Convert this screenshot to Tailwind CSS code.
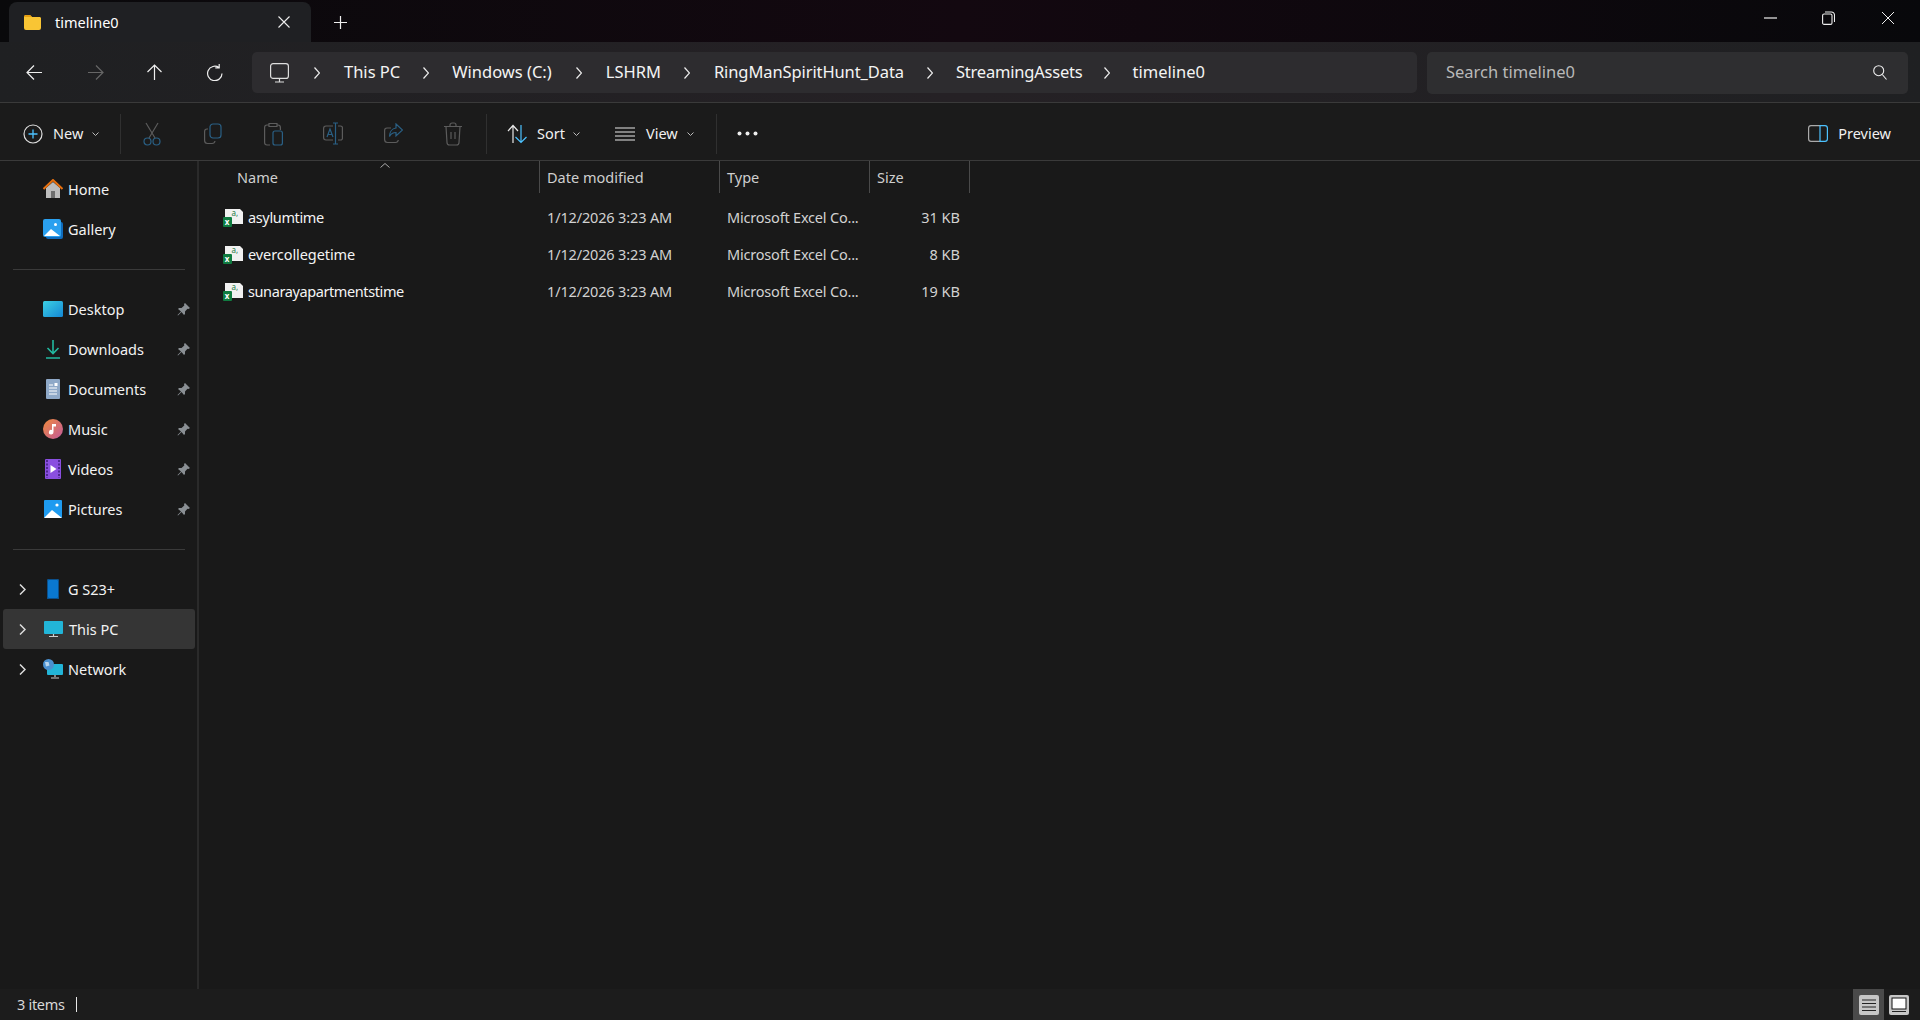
<!DOCTYPE html>
<html>
  <head>
    <meta charset="UTF-8" />
    <script src="https://cdn.jsdelivr.net/npm/@tailwindcss/browser@4"></script>
    <title>timeline0 - File Explorer</title>
  </head>
  <body>
    <div class="w-[1920px] h-[1020px] overflow-hidden flex flex-col bg-[#191919] text-white font-['Noto_Sans',sans-serif]">
      <!-- title bar -->
      <div class="h-[42px] shrink-0 flex items-end bg-linear-to-r from-[#09090b] via-[#130810] to-[#08080b]">
        <div class="ml-[9px] w-[302px] h-[40px] bg-[#1f2023] rounded-t-[8px] flex items-center">
          <svg class="ml-[14px] w-[19px] h-[16px]" viewBox="0 0 19 16"><path d="M1 3a2 2 0 0 1 2-2h4l2 2h8a2 2 0 0 1 1 1v10a2 2 0 0 1-2 2H3a2 2 0 0 1-2-2z" fill="#f9c534"/><path d="M1 3a2 2 0 0 1 2-2h4l2 2z" fill="#e59e12"/></svg>
          <span class="ml-[13px] text-[14.5px] leading-none">timeline0</span>
          <svg class="ml-auto mr-[21px] w-[12px] h-[12px]" viewBox="0 0 12 12" fill="none" stroke="#eee" stroke-width="1.1"><path d="M.5.5l11 11M11.5.5l-11 11"/></svg>
        </div>
        <svg class="ml-[23px] mb-[13px] w-[13px] h-[13px]" viewBox="0 0 13 13" fill="none" stroke="#eee" stroke-width="1.2"><path d="M6.5 0v13M0 6.5h13"/></svg>
        <div class="ml-auto h-[42px] pb-[7px] flex items-center">
          <svg class="w-[13px] h-[2px]" viewBox="0 0 13 2"><path d="M0 1h13" stroke="#eee" stroke-width="1.2"/></svg>
          <svg class="ml-[45px] w-[13px] h-[14px]" viewBox="0 0 13 14" fill="none" stroke="#eee" stroke-width="1.1"><rect x=".6" y="3" width="9.4" height="10.4" rx="1.5"/><path d="M3 1h6.5a3 3 0 0 1 3 3v7"/></svg>
          <svg class="ml-[47px] mr-[26px] w-[12px] h-[12px]" viewBox="0 0 12 12" fill="none" stroke="#eee" stroke-width="1"><path d="M0 0l12 12M12 0L0 12"/></svg>
        </div>
      </div>

      <!-- nav bar -->
      <div class="h-[61px] shrink-0 flex items-start border-b border-[#3a3a3a] bg-linear-to-r from-[#1f2022] via-[#252125] to-[#1f2022]">
        <div class="w-[252px] h-[60px] flex items-center">
          <div class="w-[68px] flex justify-center"><svg class="w-[17px] h-[17px]" viewBox="0 0 17 17" fill="none" stroke="#eee" stroke-width="1.2"><path d="M16 8.5H1.5M8 1.5l-7 7 7 7"/></svg></div>
          <div class="w-[54px] flex justify-center"><svg class="w-[17px] h-[17px]" viewBox="0 0 17 17" fill="none" stroke="#666" stroke-width="1.2"><path d="M1 8.5h14.5M9 1.5l7 7-7 7"/></svg></div>
          <div class="w-[64px] flex justify-center"><svg class="w-[17px] h-[17px]" viewBox="0 0 17 17" fill="none" stroke="#eee" stroke-width="1.2"><path d="M8.5 16V1.5M1.5 8l7-7 7 7"/></svg></div>
          <div class="w-[56px] flex justify-center"><svg class="w-[17px] h-[17px]" viewBox="0 0 17 17" fill="none" stroke="#eee" stroke-width="1.2"><path d="M16 9.500a7.200 7.200 0 1 1-3-5.900M13.200 0v3.900H9.300"/></svg></div>
        </div>
        <div class="mt-[10px] w-[1165px] h-[41px] rounded-[5px] bg-[#2d2c2f] flex items-center text-[16.5px] text-[#f4f4f4]">
          <svg class="ml-[18px] w-[19px] h-[20px] shrink-0" viewBox="0 0 19 20" fill="none" stroke="#ddd" stroke-width="1.2"><rect x=".6" y=".6" width="17.8" height="14.8" rx="2.5"/><path d="M9.5 15.5v3M5 19h9"/></svg>
          <svg class="ml-[25px] w-[6px] h-[12px] shrink-0" viewBox="0 0 6 12" fill="none" stroke="#eee" stroke-width="1.2"><path d="M.5.5L5.5 6 .5 11.500"/></svg>
          <span class="ml-[24px] leading-none">This PC</span>
          <svg class="ml-[23px] w-[6px] h-[12px] shrink-0" viewBox="0 0 6 12" fill="none" stroke="#eee" stroke-width="1.2"><path d="M.5.5L5.5 6 .5 11.500"/></svg>
          <span class="ml-[23px] leading-none">Windows (C:)</span>
          <svg class="ml-[24px] w-[6px] h-[12px] shrink-0" viewBox="0 0 6 12" fill="none" stroke="#eee" stroke-width="1.2"><path d="M.5.5L5.5 6 .5 11.500"/></svg>
          <span class="ml-[24px] leading-none">LSHRM</span>
          <svg class="ml-[23px] w-[6px] h-[12px] shrink-0" viewBox="0 0 6 12" fill="none" stroke="#eee" stroke-width="1.2"><path d="M.5.5L5.5 6 .5 11.500"/></svg>
          <span class="ml-[24px] leading-none tracking-[-0.1px]">RingManSpiritHunt_Data</span>
          <svg class="ml-[23px] w-[6px] h-[12px] shrink-0" viewBox="0 0 6 12" fill="none" stroke="#eee" stroke-width="1.2"><path d="M.5.5L5.5 6 .5 11.500"/></svg>
          <span class="ml-[23px] leading-none tracking-[-0.2px]">StreamingAssets</span>
          <svg class="ml-[21px] w-[6px] h-[12px] shrink-0" viewBox="0 0 6 12" fill="none" stroke="#eee" stroke-width="1.2"><path d="M.5.5L5.5 6 .5 11.500"/></svg>
          <span class="ml-[23px] leading-none">timeline0</span>
        </div>
        <div class="mt-[10px] ml-[10px] w-[481px] h-[42px] pb-[1px] rounded-[5px] bg-[#2e2e30] flex items-center text-[16.5px] text-[#b9b9b9]">
          <span class="ml-[19px] leading-none">Search timeline0</span>
          <svg class="ml-auto mr-[21px] w-[14px] h-[15px]" viewBox="0 0 14 15" fill="none" stroke="#eee" stroke-width="1.1"><circle cx="5.700" cy="5.700" r="5"/><path d="M9.300 9.500l4.200 5"/></svg>
        </div>
      </div>

      <!-- toolbar -->
      <div class="h-[58px] shrink-0 pt-[4px] flex items-center border-b border-[#3a3a3a] bg-[#1b1b1b] text-[14.5px] text-[#f0f0f0]">
        <div class="w-[120px] flex items-center">
          <svg class="ml-[23px] w-[20px] h-[20px]" viewBox="0 0 20 20" fill="none"><circle cx="10" cy="10" r="9" stroke="#ddd" stroke-width="1.2"/><path d="M10 5.500v9M5.500 10h9" stroke="#4cc2ff" stroke-width="1.3"/></svg>
          <span class="ml-[10px] leading-none">New</span>
          <svg class="ml-[9px] w-[7px] h-[4px]" viewBox="0 0 7 4" fill="none" stroke="#bbb"><path d="M.5.5l3 3 3-3"/></svg>
        </div>
        <div class="w-px h-[40px] bg-[#303030]"></div>
        <!-- disabled actions -->
        <div class="w-[62px] flex justify-center"><svg class="w-[18px] h-[24px]" viewBox="0 0 18 24" fill="none" stroke-width="1.2"><path d="M3 1l9 15M15 1L6 16" stroke="#5c5c5c"/><circle cx="4.500" cy="19.500" r="3.500" stroke="#2a6085"/><circle cx="13.500" cy="19.500" r="3.500" stroke="#2a6085"/></svg></div>
        <div class="w-[60px] flex justify-center"><svg class="w-[18px] h-[22px]" viewBox="0 0 18 22" fill="none" stroke-width="1.2"><path d="M4 6H3a2.500 2.500 0 0 0-2.400 2.500v9A3 3 0 0 0 3.500 20.500H8a3 3 0 0 0 3-2.500" stroke="#5c5c5c"/><rect x="6" y="1" width="11" height="14" rx="3" stroke="#2a6085"/></svg></div>
        <div class="w-[60px] flex justify-center"><svg class="w-[19px] h-[24px]" viewBox="0 0 19 24" fill="none" stroke-width="1.2"><path d="M5 3H3a2.500 2.500 0 0 0-2.400 2.500v15A2.500 2.500 0 0 0 3 23h3M13 3h1a2.500 2.500 0 0 1 2.400 2.500V8M5 1.500h8v3H5z" stroke="#5c5c5c"/><rect x="9" y="9" width="9.400" height="14" rx="2" stroke="#2a6085"/></svg></div>
        <div class="w-[60px] flex justify-center"><svg class="w-[20px] h-[23px]" viewBox="0 0 20 23" fill="none" stroke-width="1.2"><path d="M10 4H3A2.500 2.500 0 0 0 .6 6.500v9A2.500 2.500 0 0 0 3 18h7M15 4h2.400a2 2 0 0 1 2 2.500v9a2 2 0 0 1-2 2.500H15" stroke="#5c5c5c"/><path d="M12.500 1v21M10 1h5M10 22h5" stroke="#2a6085"/><path d="M4 15l3-8 3 8M5 12.500h4" stroke="#2a6085"/></svg></div>
        <div class="w-[60px] flex justify-center"><svg class="w-[19px] h-[21px]" viewBox="0 0 19 21" fill="none" stroke-width="1.200"><path d="M7 5H3A2.500 2.500 0 0 0 .6 7.500v9A3 3 0 0 0 3.500 19.500h8a3 3 0 0 0 2.800-2.500" stroke="#5c5c5c"/><path d="M12 1l6.500 6-6.500 6V9.500c-3 0-5 1-6.500 4 0-4.500 2.500-8 6.500-8.500z" stroke="#2a6085"/></svg></div>
        <div class="w-[60px] flex justify-center"><svg class="w-[18px] h-[24px]" viewBox="0 0 18 24" fill="none" stroke="#5c5c5c" stroke-width="1.2"><path d="M0 4.500h18M6 4.500V3a2 2 0 0 1 2-2h2a2 2 0 0 1 2 2v1.500M2 4.500l1 16a2.500 2.500 0 0 0 2.500 2.500h7a2.500 2.500 0 0 0 2.500-2.500l1-16M7 10v7M11 10v7"/></svg></div>
        <div class="w-[3px]"></div>
        <div class="w-px h-[40px] bg-[#303030]"></div>
        <div class="w-[115px] flex items-center">
          <svg class="ml-[20px] w-[20px] h-[20px]" viewBox="0 0 20 20" fill="none" stroke-width="1.2"><path d="M6 19V2M1 7l5-5.500L11 7" stroke="#e8e8e8"/><path d="M14 1v17.500M8.500 13l5.500 5.500 5.500-5.500" stroke="#4cc2ff"/></svg>
          <span class="ml-[10px] leading-none">Sort</span>
          <svg class="ml-[8px] w-[7px] h-[4px]" viewBox="0 0 7 4" fill="none" stroke="#bbb"><path d="M.5.5l3 3 3-3"/></svg>
        </div>
        <div class="w-[114px] flex items-center">
          <svg class="ml-[13px] w-[20px] h-[14px]" viewBox="0 0 20 14" fill="none" stroke="#e8e8e8" stroke-width="1.200"><path d="M0 1h20M0 5h20M0 9h20M0 13h20"/></svg>
          <span class="ml-[11px] leading-none">View</span>
          <svg class="ml-[9px] w-[7px] h-[4px]" viewBox="0 0 7 4" fill="none" stroke="#bbb"><path d="M.5.5l3 3 3-3"/></svg>
        </div>
        <div class="w-px h-[40px] bg-[#303030]"></div>
        <svg class="ml-[20px] w-[21px] h-[5px]" viewBox="0 0 21 5" fill="#eee"><circle cx="2.500" cy="2.500" r="2"/><circle cx="10.500" cy="2.500" r="2"/><circle cx="18.500" cy="2.500" r="2"/></svg>
        <div class="ml-auto mr-[29px] flex items-center">
          <svg class="w-[20px] h-[17px]" viewBox="0 0 20 17" fill="none" stroke-width="1.200"><path d="M12 .6H3A2.500 2.500 0 0 0 .6 3v11A2.500 2.500 0 0 0 3 16.400h9" stroke="#aaa"/><path d="M12 .6h5A2.500 2.500 0 0 1 19.400 3v11a2.500 2.500 0 0 1-2.400 2.400h-5z" stroke="#4cc2ff"/></svg>
          <span class="ml-[10px] leading-none">Preview</span>
        </div>
      </div>

      <!-- main -->
      <div class="flex-1 min-h-0 flex">
        <!-- sidebar -->
        <div class="w-[199px] shrink-0 border-r-2 border-[#2a2a2a] pt-[8px] text-[14.5px] text-[#f2f2f2]">
          <div class="h-10 flex items-center pl-[43px]">
            <svg class="w-[20px] h-[20px]" viewBox="0 0 20 20"><path d="M3 9l7-6 7 6v10H3z" fill="#bdbdbd"/><rect x="8" y="12" width="4" height="7" fill="#6f6f6f"/><path d="M.5 10L10 1l9.500 9" fill="none" stroke="#e8700f" stroke-width="2"/></svg>
            <span class="ml-[5px] leading-none">Home</span>
          </div>
          <div class="h-10 flex items-center pl-[43px]">
            <svg class="w-[20px] h-[20px]" viewBox="0 0 20 20"><rect x="3" y="3" width="17" height="17" rx="2" fill="#0f6cbd"/><rect y="0" width="18" height="18" rx="2" fill="#2aa0ef"/><path d="M1 17l7-7 9 7z" fill="#fff"/><circle cx="12.500" cy="5.500" r="1.500" fill="#fff"/></svg>
            <span class="ml-[5px] leading-none">Gallery</span>
          </div>
          <div class="ml-[13px] mt-[20px] mb-[19px] w-[172px] h-px bg-[#3a3a3a]"></div>
          <div class="h-10 flex items-center pl-[43px]">
            <svg class="w-[20px] h-[16px]" viewBox="0 0 20 16"><defs><linearGradient id="scr" x1="0" y1="0" x2="1" y2="1"><stop offset="0" stop-color="#3cd0e4"/><stop offset="1" stop-color="#1487d4"/></linearGradient></defs><rect width="20" height="16" rx="1.500" fill="url(#scr)"/></svg>
            <span class="ml-[5px] leading-none">Desktop</span>
            <svg class="ml-auto mr-[7px] w-[13px] h-[13px]" viewBox="0 0 13 13" fill="#8a8f94"><path d="M8 0l5 5-1.500 1-1-.3L8 8.500V11l-1 1-2.500-3L1 12.500.5 12 4 8.500 1 6l1-1h2.500l2.800-2.500L7 1z"/></svg>
          </div>
          <div class="h-10 flex items-center pl-[43px]">
            <svg class="w-[20px] h-[20px]" viewBox="0 0 20 20" fill="none" stroke="#22b9a0" stroke-width="1.600"><path d="M10 1v13M4.500 9l5.500 5.500L15.500 9M3 19h14"/></svg>
            <span class="ml-[5px] leading-none">Downloads</span>
            <svg class="ml-auto mr-[7px] w-[13px] h-[13px]" viewBox="0 0 13 13" fill="#8a8f94"><path d="M8 0l5 5-1.500 1-1-.3L8 8.500V11l-1 1-2.500-3L1 12.500.5 12 4 8.500 1 6l1-1h2.500l2.800-2.500L7 1z"/></svg>
          </div>
          <div class="h-10 flex items-center pl-[46px]">
            <svg class="w-[14px] h-[20px]" viewBox="0 0 14 20"><rect width="14" height="20" rx="1" fill="#8fa9c8"/><path d="M3 6h4M3 9h8M3 12h8M3 15h8" stroke="#fff"/><rect x="8.500" y="4" width="3" height="3" fill="#fff"/></svg>
            <span class="ml-[8px] leading-none">Documents</span>
            <svg class="ml-auto mr-[7px] w-[13px] h-[13px]" viewBox="0 0 13 13" fill="#8a8f94"><path d="M8 0l5 5-1.500 1-1-.3L8 8.500V11l-1 1-2.500-3L1 12.500.5 12 4 8.500 1 6l1-1h2.500l2.800-2.500L7 1z"/></svg>
          </div>
          <div class="h-10 flex items-center pl-[43px]">
            <svg class="w-[20px] h-[20px]" viewBox="0 0 20 20"><defs><linearGradient id="mus" x1="0" y1="0" x2="1" y2="1"><stop offset="0" stop-color="#f08a3c"/><stop offset="1" stop-color="#c25a9c"/></linearGradient></defs><circle cx="10" cy="10" r="10" fill="url(#mus)"/><path d="M9 5h4v2.500h-2.500V13a2.300 2.300 0 1 1-1.500-2z" fill="#fff"/></svg>
            <span class="ml-[5px] leading-none">Music</span>
            <svg class="ml-auto mr-[7px] w-[13px] h-[13px]" viewBox="0 0 13 13" fill="#8a8f94"><path d="M8 0l5 5-1.500 1-1-.3L8 8.500V11l-1 1-2.500-3L1 12.500.5 12 4 8.500 1 6l1-1h2.500l2.800-2.500L7 1z"/></svg>
          </div>
          <div class="h-10 flex items-center pl-[45px]">
            <svg class="w-[16px] h-[20px]" viewBox="0 0 16 20"><rect width="16" height="20" rx="1" fill="#8a4fe0"/><path d="M2 1v18M14 1v18" stroke="#3b1d78" stroke-width="1.500" stroke-dasharray="2 1.500"/><path d="M5.500 6l6 4-6 4z" fill="#fff"/></svg>
            <span class="ml-[7px] leading-none">Videos</span>
            <svg class="ml-auto mr-[7px] w-[13px] h-[13px]" viewBox="0 0 13 13" fill="#8a8f94"><path d="M8 0l5 5-1.500 1-1-.3L8 8.500V11l-1 1-2.500-3L1 12.500.5 12 4 8.500 1 6l1-1h2.500l2.800-2.500L7 1z"/></svg>
          </div>
          <div class="h-10 flex items-center pl-[44px]">
            <svg class="w-[18px] h-[18px]" viewBox="0 0 18 18"><rect width="18" height="18" rx="1" fill="#1e9bf0"/><path d="M0 18l8-8 10 8z" fill="#fff"/><circle cx="13" cy="5" r="1.600" fill="#fff"/></svg>
            <span class="ml-[6px] leading-none">Pictures</span>
            <svg class="ml-auto mr-[7px] w-[13px] h-[13px]" viewBox="0 0 13 13" fill="#8a8f94"><path d="M8 0l5 5-1.500 1-1-.3L8 8.500V11l-1 1-2.500-3L1 12.500.5 12 4 8.500 1 6l1-1h2.500l2.800-2.500L7 1z"/></svg>
          </div>
          <div class="ml-[13px] mt-[20px] mb-[19px] w-[172px] h-px bg-[#3a3a3a]"></div>
          <div class="h-10 flex items-center">
            <svg class="ml-[19px] w-[7px] h-[11px]" viewBox="0 0 7 11" fill="none" stroke="#ddd" stroke-width="1.500"><path d="M1 .5l5 5-5 5"/></svg>
            <svg class="ml-[21px] w-[12px] h-[20px]" viewBox="0 0 12 20"><rect width="12" height="20" rx="1.500" fill="#0a78d0"/><rect x=".5" y=".5" width="11" height="19" rx="1.500" fill="none" stroke="#0b4f8a"/></svg>
            <span class="ml-[9px] leading-none">G S23+</span>
          </div>
          <div class="h-10 ml-[3px] w-[192px] rounded-[3px] bg-[#353535] flex items-center">
            <svg class="ml-[16px] w-[7px] h-[11px]" viewBox="0 0 7 11" fill="none" stroke="#ddd" stroke-width="1.500"><path d="M1 .5l5 5-5 5"/></svg>
            <svg class="ml-[18px] w-[19px] h-[17px]" viewBox="0 0 19 17"><rect width="19" height="13" rx="1" fill="#22b5d8"/><path d="M9.500 13v2M5 15.500h9" stroke="#ccc" stroke-width="1.200"/></svg>
            <span class="ml-[6px] leading-none">This PC</span>
          </div>
          <div class="h-10 flex items-center">
            <svg class="ml-[19px] w-[7px] h-[11px]" viewBox="0 0 7 11" fill="none" stroke="#ddd" stroke-width="1.500"><path d="M1 .5l5 5-5 5"/></svg>
            <svg class="ml-[17px] w-[20px] h-[20px]" viewBox="0 0 20 20"><rect x="4" y="5" width="16" height="11" rx="1" fill="#22b5d8"/><path d="M12 16v2M8 19h8" stroke="#ccc" stroke-width="1.200"/><circle cx="5.500" cy="5.500" r="5.500" fill="#4a90d0"/><path d="M2 3h3.500l1 3.500-3.500 1z" fill="#b7d4ee"/></svg>
            <span class="ml-[5px] leading-none">Network</span>
          </div>
        </div>

        <!-- file list -->
        <div class="flex-1 min-w-0 text-[14.5px]">
          <div class="relative flex h-[32px] text-[#cfcfcf]">
            <svg class="absolute left-[181px] top-[2px] w-[10px] h-[5px]" viewBox="0 0 10 5" fill="none" stroke="#aaa"><path d="M.5 4.500L5 .5l4.500 4"/></svg>
            <div class="w-[341px] border-r border-[#4a4a4a] pl-[38px] flex items-center leading-none">Name</div>
            <div class="w-[180px] border-r border-[#4a4a4a] pl-[7px] flex items-center leading-none">Date modified</div>
            <div class="w-[150px] border-r border-[#4a4a4a] pl-[7px] flex items-center leading-none">Type</div>
            <div class="w-[100px] border-r border-[#4a4a4a] pl-[7px] flex items-center leading-none">Size</div>
          </div>
          <div class="pt-[6px] text-[#d2d2d2]">
            <div class="flex h-[37px] items-center">
              <div class="w-[341px] pl-[24px] flex items-center text-[#f4f4f4]">
                <svg class="overflow-visible w-[20px] h-[18px] shrink-0" viewBox="0 0 20 18"><path d="M2 0h15l3 3v12H2z" fill="#f1f1f1"/><text x="8.500" y="7" font-size="8" font-family="Noto Sans" fill="#1f7a45">a,</text><rect y="8" width="9" height="10" rx="1" fill="#107c41"/><text x="1.800" y="15.500" font-size="8" font-weight="700" font-family="Noto Sans" fill="#fff">x</text></svg>
                <span class="ml-[5px] leading-none tracking-[-0.36px]">asylumtime</span>
              </div>
              <div class="w-[180px] pl-[7px] leading-none whitespace-nowrap tracking-[-0.15px]">1/12/2026 3:23 AM</div>
              <div class="w-[150px] pl-[7px] leading-none whitespace-nowrap tracking-[-0.2px]">Microsoft Excel Co...</div>
              <div class="w-[100px] pr-[10px] text-right leading-none">31 KB</div>
            </div>
            <div class="flex h-[37px] items-center">
              <div class="w-[341px] pl-[24px] flex items-center text-[#f4f4f4]">
                <svg class="overflow-visible w-[20px] h-[18px] shrink-0" viewBox="0 0 20 18"><path d="M2 0h15l3 3v12H2z" fill="#f1f1f1"/><text x="8.500" y="7" font-size="8" font-family="Noto Sans" fill="#1f7a45">a,</text><rect y="8" width="9" height="10" rx="1" fill="#107c41"/><text x="1.800" y="15.500" font-size="8" font-weight="700" font-family="Noto Sans" fill="#fff">x</text></svg>
                <span class="ml-[5px] leading-none tracking-[-0.08px]">evercollegetime</span>
              </div>
              <div class="w-[180px] pl-[7px] leading-none whitespace-nowrap tracking-[-0.15px]">1/12/2026 3:23 AM</div>
              <div class="w-[150px] pl-[7px] leading-none whitespace-nowrap tracking-[-0.2px]">Microsoft Excel Co...</div>
              <div class="w-[100px] pr-[10px] text-right leading-none">8 KB</div>
            </div>
            <div class="flex h-[37px] items-center">
              <div class="w-[341px] pl-[24px] flex items-center text-[#f4f4f4]">
                <svg class="overflow-visible w-[20px] h-[18px] shrink-0" viewBox="0 0 20 18"><path d="M2 0h15l3 3v12H2z" fill="#f1f1f1"/><text x="8.500" y="7" font-size="8" font-family="Noto Sans" fill="#1f7a45">a,</text><rect y="8" width="9" height="10" rx="1" fill="#107c41"/><text x="1.800" y="15.500" font-size="8" font-weight="700" font-family="Noto Sans" fill="#fff">x</text></svg>
                <span class="ml-[5px] leading-none tracking-[-0.4px]">sunarayapartmentstime</span>
              </div>
              <div class="w-[180px] pl-[7px] leading-none whitespace-nowrap tracking-[-0.15px]">1/12/2026 3:23 AM</div>
              <div class="w-[150px] pl-[7px] leading-none whitespace-nowrap tracking-[-0.2px]">Microsoft Excel Co...</div>
              <div class="w-[100px] pr-[10px] text-right leading-none">19 KB</div>
            </div>
          </div>
        </div>
      </div>

      <!-- status bar -->
      <div class="h-[31px] shrink-0 flex items-center bg-[#1c1c1c] text-[14.5px] text-[#d8d8d8]">
        <span class="ml-[17px] leading-none tracking-[-0.3px]">3 items</span>
        <div class="ml-[11px] w-px h-[15px] bg-[#e8e8e8]"></div>
        <div class="ml-auto w-[31px] h-[31px] bg-[#4a4a4a] flex items-center justify-center">
          <svg class="w-[20px] h-[20px]" viewBox="0 0 20 20"><rect width="20" height="20" rx="2" fill="#c6c6c6"/><path d="M3 5h14M3 8.500h14M3 12h14M3 15.500h14" stroke="#222" stroke-width="1"/></svg>
        </div>
        <div class="ml-[5px] mr-[11px] w-[20px] h-[20px]">
          <svg class="w-[20px] h-[20px]" viewBox="0 0 20 20"><rect width="20" height="20" rx="2" fill="#c6c6c6"/><rect x="3" y="3" width="14" height="11" fill="#fff" stroke="#111"/><path d="M3 16.500h14" stroke="#222"/></svg>
        </div>
      </div>
    </div>
  </body>
</html>
